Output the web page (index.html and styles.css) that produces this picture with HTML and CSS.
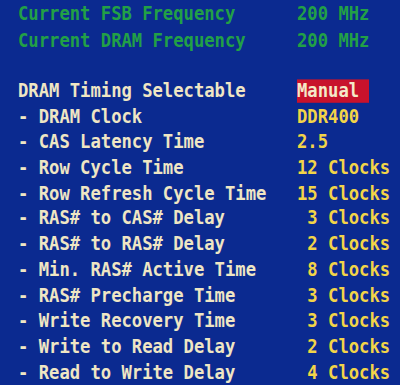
FILE: index.html
```html
<!DOCTYPE html>
<html>
	<head>
		<meta charset="utf-8">
		<title>DRAM Timing</title>
		<link rel="stylesheet" href="styles.css">
	</head>
	<body>
		<div class="screen">
			<!-- 当前频率 -->
			<div class="row info"><span class="lbl">Current FSB Frequency</span><span class="val">200 MHz</span></div>
			<div class="row info"><span class="lbl">Current DRAM Frequency</span><span class="val">200 MHz</span></div>
			<div class="blank"></div>

			<!-- 时序设置 -->
			<div class="row"><span class="lbl">DRAM Timing Selectable</span><span class="val sel">Manual </span></div>
			<div class="row"><span class="lbl">- DRAM Clock</span><span class="val">DDR400</span></div>
			<div class="row"><span class="lbl">- CAS Latency Time</span><span class="val">2.5</span></div>
			<div class="row"><span class="lbl">- Row Cycle Time</span><span class="val">12 Clocks</span></div>
			<div class="row"><span class="lbl">- Row Refresh Cycle Time</span><span class="val">15 Clocks</span></div>
			<div class="row"><span class="lbl">- RAS# to CAS# Delay</span><span class="val"> 3 Clocks</span></div>
			<div class="row"><span class="lbl">- RAS# to RAS# Delay</span><span class="val"> 2 Clocks</span></div>
			<div class="row"><span class="lbl">- Min. RAS# Active Time</span><span class="val"> 8 Clocks</span></div>
			<div class="row"><span class="lbl">- RAS# Precharge Time</span><span class="val"> 3 Clocks</span></div>
			<div class="row"><span class="lbl">- Write Recovery Time</span><span class="val"> 3 Clocks</span></div>
			<div class="row"><span class="lbl">- Write to Read Delay</span><span class="val"> 2 Clocks</span></div>
			<div class="row"><span class="lbl">- Read to Write Delay</span><span class="val"> 4 Clocks</span></div>
		</div>
	</body>
</html>
```
FILE: styles.css
```css
*{
	margin: 0;
	padding: 0;
}
html, body {
	background-color: #0b2a90;
	overflow: hidden;
}
body {
	width: 382px;
	height: 384px;
	padding: 1px 0 0 18px;
}
/* 字体纵向拉高,模拟BIOS点阵字 */
.screen {
	font-family: "DejaVu Sans Mono", "Liberation Mono", monospace;
	font-weight: bold;
	font-size: 17.2px;
	line-height: 21.9px;
	color: #efe6c4;
	transform: scaleY(1.17);
	transform-origin: left top;
}
.row {
	display: flex;
	height: 21.9px;
}
.lbl, .val {
	white-space: pre;
}
.lbl {
	width: 279px;
	flex: none;
}
.val {
	color: #f2d448;
}
.info .lbl,
.info .val {
	color: #22a046;
}
.info:nth-child(2) {
	margin-top: 0.8px;
}
.blank {
	height: 21.4px;
}
.sel {
	background-color: #c8122c;
	color: #f4e9c8;
	line-height: 19.7px;
	height: 19.7px;
	margin-top: 1.5px;
}
```
